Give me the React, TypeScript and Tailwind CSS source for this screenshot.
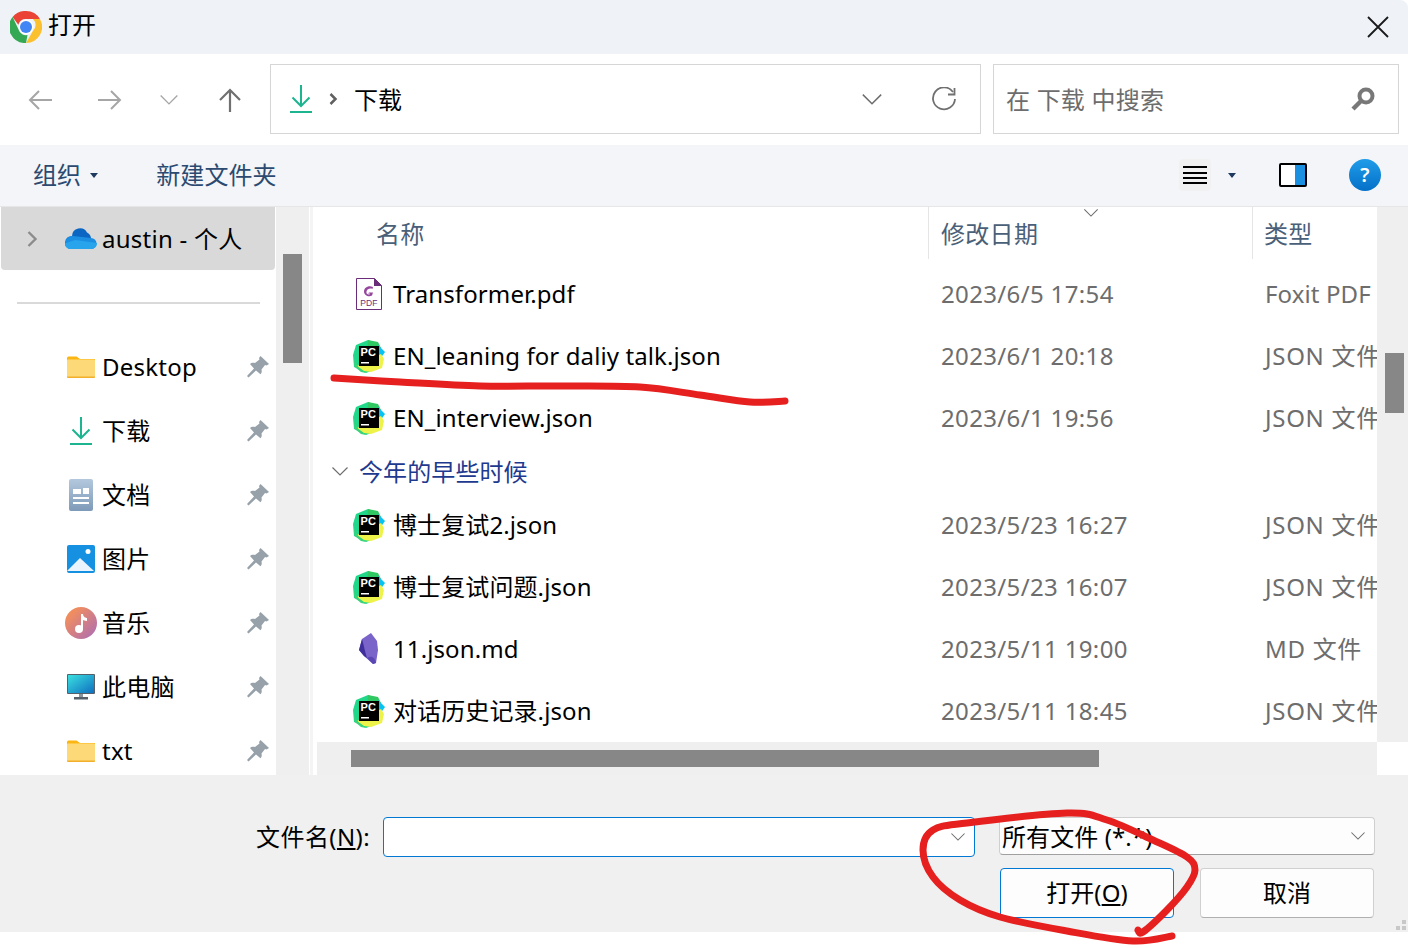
import React from 'react';

const toPath = (p: number[][]) => {
  let d = `M${p[0][0]} ${p[0][1]}`;
  for (let i = 0; i < p.length - 1; i++) {
    const a = p[Math.max(i - 1, 0)], b = p[i], c = p[i + 1], e = p[Math.min(i + 2, p.length - 1)];
    d += ` C${b[0] + (c[0] - a[0]) / 6} ${b[1] + (c[1] - a[1]) / 6} ${c[0] - (e[0] - b[0]) / 6} ${c[1] - (e[1] - b[1]) / 6} ${c[0]} ${c[1]}`;
  }
  return d;
};

const underline = [[334, 378], [400, 382], [480, 386], [560, 386], [640, 387], [700, 395], [750, 402], [785, 401]];
const circle = [[1172, 936], [1133, 941], [1067, 931], [1000, 917], [960, 900], [933, 877], [923, 850], [933, 830], [967, 823], [1067, 813], [1107, 820], [1153, 840], [1187, 857], [1195, 870], [1187, 887], [1167, 910], [1143, 932], [1138, 930]];

const Chrome = () => (
  <svg viewBox="0 0 32 32" className="w-8 h-8 shrink-0">
    <path d="M16 0a16 16 0 0 1 13.900 8H16a8 8 0 0 0-7.700 5.800L2.600 6A16 16 0 0 1 16 0z" fill="#ea4335" />
    <path d="M29.900 8A16 16 0 0 1 16 32l6.900-12A8 8 0 0 0 22.900 8z" fill="#fbc02d" />
    <path d="M2.600 6l6.900 14.500A8 8 0 0 0 17.500 24L16 32A16 16 0 0 1 2.600 6z" fill="#34a853" />
    <circle cx="16" cy="16" r="7.400" fill="#fff" />
    <circle cx="16" cy="16" r="6" fill="#4285f4" />
  </svg>
);

const DownloadIcon = ({ className }: { className: string }) => (
  <svg viewBox="0 0 22 28" className={className} fill="none" stroke="#1db58f" strokeWidth="2">
    <path d="M11 0v21M2.500 12.500L11 21l8.500-8.500" />
    <path d="M0 27h22" />
  </svg>
);

const Folder = () => (
  <svg viewBox="0 0 28 22" className="w-7 h-[22px]">
    <path d="M0 2a1.500 1.500 0 0 1 1.500-1.500h8L13 3h15v4H0z" fill="#fbb614" />
    <rect x="0" y="3.500" width="28" height="18" rx="1" fill="#fdd978" />
    <path d="M0 20.500h28v.5a1 1 0 0 1-1 1H1a1 1 0 0 1-1-1z" fill="#f2b02a" />
  </svg>
);

const Pin = () => (
  <svg viewBox="0 0 22 22" className="w-[22px] h-[22px]" fill="#96a1a9">
    <path d="M13.500 0L22 8l-2.500 1.500-1.500-.5-3.500 4.500c.5 2 .3 3.500-1 4.800L9 14.500 1.500 21.500 0 20l7-7.500-4-4.500c1.300-1.300 3-1.500 5-1L12.500 3.500l-.5-1.500z" />
  </svg>
);

const Docs = () => (
  <svg viewBox="0 0 24 32" className="w-6 h-8">
    <defs>
      <linearGradient id="docGrad" x1="0" y1="0" x2="0" y2="1">
        <stop offset="0" stopColor="#b3c8dd" />
        <stop offset="1" stopColor="#7d9ab8" />
      </linearGradient>
    </defs>
    <rect width="24" height="32" rx="2" fill="url(#docGrad)" />
    <path d="M4 10h8v5H4zM14 9h6v6h-6z" fill="#fff" />
    <path d="M4 18h16v2H4zM4 23h16v2H4z" fill="#fff" />
  </svg>
);

const Pictures = () => (
  <svg viewBox="0 0 28 28" className="w-7 h-7">
    <rect width="28" height="28" rx="2" fill="#1690e0" />
    <circle cx="21" cy="6.500" r="2.500" fill="#fff" />
    <path d="M0 26L13 13l14 13H0z" fill="#eaf4fc" />
  </svg>
);

const Music = () => (
  <svg viewBox="0 0 32 32" className="w-8 h-8">
    <defs>
      <linearGradient id="musicGrad" x1="0" y1="0" x2="1" y2="1">
        <stop offset="0.200" stopColor="#f08d5f" />
        <stop offset="1" stopColor="#a96bb9" />
      </linearGradient>
    </defs>
    <circle cx="16" cy="16" r="16" fill="url(#musicGrad)" />
    <circle cx="14" cy="22" r="4" fill="#fff" />
    <path d="M16 22V7h2c0 3 3 4 4 4v3c-2 0-4-1-4-1v9z" fill="#fff" />
  </svg>
);

const Monitor = () => (
  <svg viewBox="0 0 28 26" className="w-7 h-[26px]">
    <defs>
      <linearGradient id="monGrad" x1="0" y1="0" x2="1" y2="1">
        <stop offset="0" stopColor="#3ae0e0" />
        <stop offset="1" stopColor="#0f6fc0" />
      </linearGradient>
    </defs>
    <rect width="28" height="20" rx="1" fill="#55606a" />
    <rect x="1" y="1" width="26" height="18" fill="url(#monGrad)" />
    <rect x="12" y="20" width="4" height="3" fill="#8a959d" />
    <rect x="7" y="23" width="14" height="2.500" fill="#55606a" />
  </svg>
);

const OneDrive = () => (
  <svg viewBox="0 0 32 21" className="w-8 h-[21px]">
    <path d="M7 8a8 8 0 0 1 15-3.500A7 7 0 0 1 26 10L12 14z" fill="#0a66c2" />
    <path d="M7 8a5.500 5.500 0 0 0-1 13h6l4-9z" fill="#1584dc" />
    <path d="M26 10a5.500 5.500 0 0 1 0 11H6a6 6 0 0 1-6-5.500C1 11 4 8 8 8z" fill="#1b8ee2" />
    <path d="M5 21a5 5 0 0 1-5-5.500L10 12l22 3a5.800 5.800 0 0 1-6 6z" fill="#28a4ec" />
  </svg>
);

const PdfIcon = () => (
  <svg viewBox="0 0 26 32" className="w-[26px] h-8">
    <path d="M.5.500h18l7 7v24H.5z" fill="#fff" stroke="#6b2d79" />
    <path d="M18 0l8 8h-8z" fill="#6b2d79" />
    <path d="M17 9c-5-2-9 1-9 4.500 0 4 5 6 8 4l1-3h-4l-1 1h2l-.5 1c-2 .5-3.500-1-3-3 .5-2.500 3.500-3.500 6-2.500z" fill="#96469f" />
    <text x="13" y="28" textAnchor="middle" fontSize="8.500" fill="#6b2d79" fontFamily="Liberation Sans">PDF</text>
  </svg>
);

const PyCharm = () => (
  <svg viewBox="0 0 32 33" className="w-8 h-[33px]">
    <path d="M3 5L15 0l6 3-3 28-5 2L1 27 0 15z" fill="#21d789" />
    <path d="M15 0l10 2 3 6-14 8z" fill="#2fc862" />
    <path d="M25 5l7 7-5 7-5-4z" fill="#07c3f2" />
    <path d="M4 26l24-12 3 5-2 9-11 4-7-1z" fill="#eef34a" />
    <path d="M1 20l5 8 7 5-5-1-6-5z" fill="#3fd07a" />
    <rect x="6" y="6" width="20" height="20" fill="#000" />
    <rect x="8" y="22" width="8" height="1.500" fill="#fff" />
    <text x="7.500" y="16" fontSize="11" fontWeight="700" fill="#fff" fontFamily="Liberation Sans">PC</text>
  </svg>
);

const Obsidian = () => (
  <svg viewBox="0 0 20 32" className="w-5 h-8">
    <path d="M12 0l6 8 1 9-2 13-3 1-9-8-5-6 3-11z" fill="#7a63c9" />
    <path d="M3 6L0 17l5 6 3 2c-2-6-3-12-5-19z" fill="#3f2f9c" />
    <path d="M8 25l6 6 3-1c-1-5-4-8-9-5z" fill="#5b47b4" />
  </svg>
);

const Caret = () => (
  <svg viewBox="0 0 8 5" className="w-2 h-[5px]" fill="#1f3a5f">
    <path d="M0 0h8L4 5z" />
  </svg>
);

const Chevron = ({ className, color = '#6d6d6d' }: { className: string; color?: string }) => (
  <svg viewBox="0 0 16 9" className={className} fill="none" stroke={color} strokeWidth="1.200">
    <path d="M.5.500L8 8l7.500-7.500" />
  </svg>
);

const sideItems = [
  { icon: <Folder />, label: 'Desktop' },
  { icon: <DownloadIcon className="w-[22px] h-7" />, label: '下载' },
  { icon: <Docs />, label: '文档' },
  { icon: <Pictures />, label: '图片' },
  { icon: <Music />, label: '音乐' },
  { icon: <Monitor />, label: '此电脑' },
  { icon: <Folder />, label: 'txt' },
];

const FileRow = ({ icon, name, date, type }: { icon: React.ReactNode; name: string; date: string; type: string }) => (
  <div className="h-[62px] flex items-center">
    <div className="w-[76px] pl-[28px] flex justify-center shrink-0">{icon}</div>
    <div className="w-[548px] text-black shrink-0 whitespace-nowrap">{name}</div>
    <div className="w-[324px] text-[#6d6d6d] tracking-[0.35px] shrink-0 whitespace-nowrap">{date}</div>
    <div className={type === 'Foxit PDF' ? 'text-[#6d6d6d] whitespace-nowrap' : 'text-[#6d6d6d] whitespace-nowrap tracking-[0.7px]'}>{type}</div>
  </div>
);

export default function App() {
  return (
    <div className="relative w-[1408px] h-[948px] overflow-hidden bg-white font-['Noto_Sans','Noto_Sans_CJK_SC',sans-serif] text-[24px] leading-none tracking-[0.1px]">
      {/* 标题栏 */}
      <div className="h-[54px] bg-[#eff3f8] rounded-tr-lg flex items-center pl-[10px] pr-[19px]">
        <Chrome />
        <span className="ml-[6px] mb-[5px] text-black">打开</span>
        <svg viewBox="0 0 22 22" className="ml-auto w-[22px] h-[22px]" fill="none" stroke="#1a1a1a" strokeWidth="1.800">
          <path d="M1 1l20 20M21 1L1 21" />
        </svg>
      </div>

      {/* 地址栏 */}
      <div className="h-[91px] flex items-center pb-px pl-[28px] pr-[9px]">
        <svg viewBox="0 0 24 22" className="mt-[2px] w-6 h-[22px]" fill="none" stroke="#a6a6a6" strokeWidth="2">
          <path d="M24 11H2M11 2l-9 9 9 9" />
        </svg>
        <svg viewBox="0 0 24 22" className="mt-[2px] ml-[46px] w-6 h-[22px]" fill="none" stroke="#a6a6a6" strokeWidth="2">
          <path d="M0 11h22M13 2l9 9-9 9" />
        </svg>
        <Chevron className="mt-[2px] ml-[38px] w-[18px] h-[10px]" color="#a6a6a6" />
        <svg viewBox="0 0 24 24" className="mt-[2px] ml-[40px] w-6 h-6" fill="none" stroke="#707070" strokeWidth="2.200">
          <path d="M12 24V2M2 12L12 2l10 10" />
        </svg>
        <div className="ml-[28px] w-[711px] h-[70px] border border-[#d6d6d6] flex items-center pl-[19px] pr-[24px]">
          <DownloadIcon className="w-[22px] h-7" />
          <svg viewBox="0 0 9 12" className="ml-[17px] w-[9px] h-3" fill="none" stroke="#606060" strokeWidth="2.500">
            <path d="M1.500 1l5 5-5 5" />
          </svg>
          <span className="ml-4 mt-[2px] text-black">下载</span>
          <Chevron className="ml-auto w-5 h-[11px]" />
          <svg viewBox="0 0 24 24" className="ml-[50px] w-6 h-6" fill="none" stroke="#707070" strokeWidth="1.800">
            <path d="M21 5a11 11 0 1 0 2 7" />
            <path d="M22.500 1v6.500H16" />
          </svg>
        </div>
        <div className="ml-[12px] w-[406px] h-[70px] border border-[#d6d6d6] flex items-center pl-[12px] pr-[23px] text-[#6d6d6d]">
          <span className="mt-[2px] tracking-[0.2px]">在 下载 中搜索</span>
          <svg viewBox="0 0 24 24" className="ml-auto w-6 h-6" fill="none" stroke="#787878">
            <circle cx="15" cy="9" r="6.500" strokeWidth="4" />
            <path d="M10 14l-8 8" strokeWidth="4.500" />
          </svg>
        </div>
      </div>

      {/* 工具栏 */}
      <div className="h-[62px] bg-[#f3f5f8] border-b border-[#e6e6e6] flex items-center pb-px pl-[33px] pr-[27px] text-[#2c4a70]">
        <span>组织</span>
        <span className="ml-[9px]"><Caret /></span>
        <span className="ml-[58px]">新建文件夹</span>
        <div className="ml-auto w-8 h-8 rounded bg-[#f1f1f1] flex items-center justify-center">
          <svg viewBox="0 0 24 20" className="w-6 h-5" stroke="#000" strokeWidth="2">
            <path d="M0 2h24M0 8h24M0 13h24M0 18h24" />
          </svg>
        </div>
        <span className="ml-[17px]"><Caret /></span>
        <svg viewBox="0 0 28 24" className="ml-[43px] w-7 h-6">
          <rect x="1" y="1" width="26" height="22" rx="1" fill="#fff" stroke="#000" strokeWidth="2" />
          <rect x="16" y="2" width="10" height="20" fill="#1b8fe0" />
        </svg>
        <div className="ml-[42px] w-8 h-8 rounded-full bg-gradient-to-b from-[#1f9ce8] to-[#0570c8] flex items-center justify-center text-white text-[20px] font-semibold">?</div>
      </div>

      {/* 主体 */}
      <div className="h-[568px] flex overflow-hidden">
        {/* 导航窗格 */}
        <div className="w-[276px] shrink-0 overflow-hidden">
          <div className="ml-px mr-px h-[63px] bg-[#d9d9d9] rounded-b-sm flex items-center text-black">
            <svg viewBox="0 0 11 16" className="ml-[26px] w-[11px] h-4" fill="none" stroke="#8c8c8c" strokeWidth="2.400">
              <path d="M1.500 1l7 7-7 7" />
            </svg>
            <span className="ml-[27px]"><OneDrive /></span>
            <span className="ml-[5px] tracking-[0.25px]">austin - 个人</span>
          </div>
          <div className="mt-8 ml-[17px] w-[243px] h-[2px] bg-[#d9d9d9]" />
          <div>
            <div className="h-[31px]" />
            {sideItems.map(item => (
              <div key={item.label} className="h-16 flex items-center pl-[65px] pr-[7px]">
                <div className="w-8 flex justify-center">{item.icon}</div>
                <span className="ml-[5px] text-black tracking-[0.25px]">{item.label}</span>
                <span className="ml-auto"><Pin /></span>
              </div>
            ))}
          </div>
        </div>
        {/* 侧边滚动条 */}
        <div className="w-[33px] shrink-0 bg-[#efefef] pt-[47px] pl-[7px]">
          <div className="w-[19px] h-[109px] bg-[#878787]" />
        </div>
        <div className="w-px shrink-0" />
        <div className="w-[3px] shrink-0 bg-[#f4f4f4]" />
        <div className="w-1 shrink-0" />

        {/* 文件列表 */}
        <div className="w-[1060px] shrink-0 flex flex-col overflow-hidden">
          <div className="h-[535px] overflow-hidden">
            <div className="h-[52px] flex items-center relative text-[#4a6078] tracking-[0.3px]">
              <span className="ml-[59px] mt-[2px] w-[552px]">名称</span>
              <div className="w-px h-full bg-[#e5e5e5]" />
              <span className="ml-3 mt-[2px] w-[311px]">修改日期</span>
              <div className="w-px h-full bg-[#e5e5e5]" />
              <span className="ml-[11px] mt-[2px]">类型</span>
              <Chevron className="absolute left-[766px] top-[2px] w-[16px] h-[8px]" />
            </div>
            <div className="h-1" />
            <FileRow icon={<PdfIcon />} name="Transformer.pdf" date="2023/6/5 17:54" type="Foxit PDF" />
            <FileRow icon={<PyCharm />} name="EN_leaning for daliy talk.json" date="2023/6/1 20:18" type="JSON 文件" />
            <FileRow icon={<PyCharm />} name="EN_interview.json" date="2023/6/1 19:56" type="JSON 文件" />
            <div className="h-[45px] flex items-center pl-[15px] text-[#1e3a8f]">
              <Chevron className="w-4 h-[9px]" />
              <span className="ml-[11px]">今年的早些时候</span>
            </div>
            <FileRow icon={<PyCharm />} name="博士复试2.json" date="2023/5/23 16:27" type="JSON 文件" />
            <FileRow icon={<PyCharm />} name="博士复试问题.json" date="2023/5/23 16:07" type="JSON 文件" />
            <FileRow icon={<Obsidian />} name="11.json.md" date="2023/5/11 19:00" type="MD 文件" />
            <FileRow icon={<PyCharm />} name="对话历史记录.json" date="2023/5/11 18:45" type="JSON 文件" />
          </div>
          <div className="h-[33px] bg-[#efefef] pt-2 pl-[34px]">
            <div className="w-[748px] h-[17px] bg-[#878787]" />
          </div>
        </div>

        {/* 纵向滚动条 */}
        <div className="w-[31px] shrink-0 flex flex-col">
          <div className="h-[535px] bg-[#efefef] pt-[146px] pl-[8px]">
            <div className="w-[19px] h-[60px] bg-[#878787]" />
          </div>
          <div className="h-[33px] bg-white" />
        </div>
      </div>

      {/* 底部 */}
      <div className="relative h-[157px] bg-[#f0f0f0] pt-[42px]">
        <div className="flex items-start justify-end pr-[33px]">
          <span className="mt-2 text-black tracking-[0.4px]">文件名(<span className="underline">N</span>):</span>
          <div className="ml-[13px] w-[592px] h-10 bg-white border border-[#0078d4] rounded-sm flex items-center justify-end pr-[9px]">
            <Chevron className="w-[14px] h-2" />
          </div>
          <div className="ml-6 w-[376px] h-[38px] bg-[#fdfdfd] border border-[#cfcfcf] border-b-[#a0a0a0] rounded-sm flex items-center pl-[2px] pr-[9px] text-black">
            <span className="mt-[2px]">所有文件 (*.*)</span>
            <Chevron className="ml-auto w-[14px] h-2" />
          </div>
        </div>
        <div className="mt-[11px] flex justify-end gap-[26px] pr-[34px]">
          <button className="w-[174px] h-[50px] bg-[#fdfdfd] border border-[#0078d4] rounded-sm text-black">打开(<span className="underline">O</span>)</button>
          <button className="w-[174px] h-[50px] bg-[#fdfdfd] border border-[#d0d0d0] border-b-[#b0b0b0] rounded-sm text-black">取消</button>
        </div>
        <svg viewBox="0 0 10 10" className="absolute right-[2px] bottom-[2px] w-[10px] h-[10px]" fill="#c8c8c8">
          <path d="M6 0h4v4H6zM0 6h4v4H0zM6 6h4v4H6z" />
        </svg>
      </div>

      {/* 红色标注 */}
      <svg viewBox="0 0 1408 948" className="absolute inset-0 w-[1408px] h-[948px] pointer-events-none" fill="none" stroke="#e61f1f" strokeLinecap="round" strokeLinejoin="round">
        <path d={toPath(underline)} strokeWidth="7" />
        <path d={toPath(circle)} strokeWidth="7" />
      </svg>
    </div>
  );
}
